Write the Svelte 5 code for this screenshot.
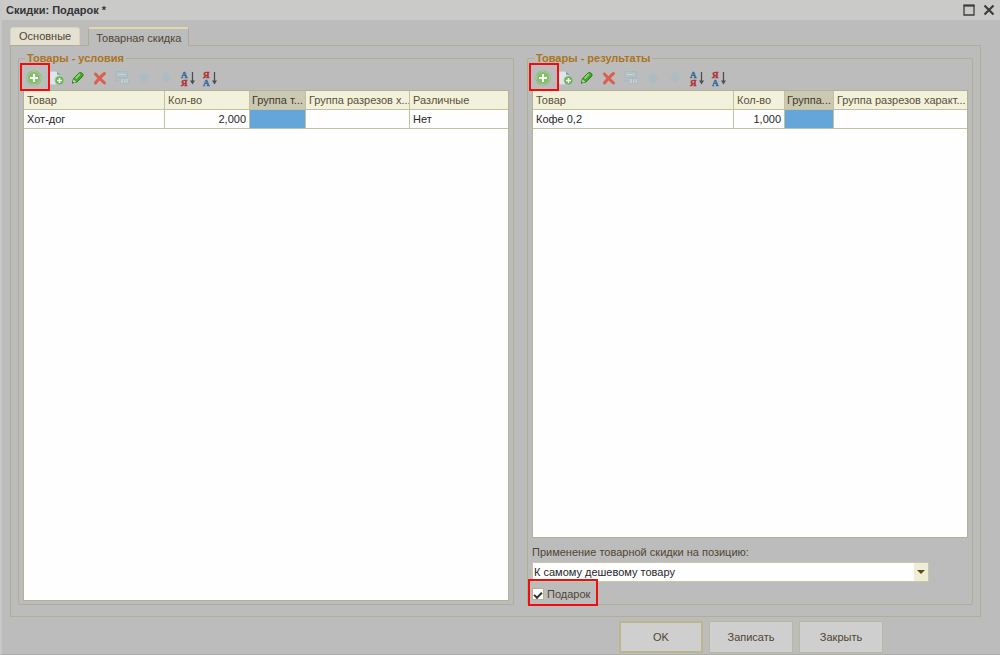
<script lang="ts">
  type Column = { title: string; width?: number; align?: string; current?: boolean }
  type Panel = { id: string; title: string; columns: Column[]; row: string[] }

  const conditions: Panel = {
    id: 'conditions',
    title: 'Товары - условия',
    columns: [
      { title: 'Товар', width: 141 },
      { title: 'Кол-во', width: 85, align: 'num' },
      { title: 'Группа т...', width: 56, current: true },
      { title: 'Группа разрезов х...', width: 104 },
      { title: 'Различные' },
    ],
    row: ['Хот-дог', '2,000', '', '', 'Нет'],
  }

  const results: Panel = {
    id: 'results',
    title: 'Товары - результаты',
    columns: [
      { title: 'Товар', width: 201 },
      { title: 'Кол-во', width: 51, align: 'num' },
      { title: 'Группа...', width: 49, current: true },
      { title: 'Группа разрезов характ...' },
    ],
    row: ['Кофе 0,2', '1,000', '', ''],
  }

  const tools = [
    { icon: 'add', label: 'Добавить' },
    { icon: 'copy', label: 'Скопировать' },
    { icon: 'edit', label: 'Изменить' },
    { icon: 'delete', label: 'Удалить' },
    { icon: 'finish', label: 'Закончить редактирование', disabled: true },
    { icon: 'up', label: 'Переместить вверх', disabled: true },
    { icon: 'down', label: 'Переместить вниз', disabled: true },
    { icon: 'asc', label: 'Сортировать по возрастанию' },
    { icon: 'desc', label: 'Сортировать по убыванию' },
  ]

  let gift = $state(true)
  let position = $state('cheapest')
</script>

{#snippet icon(name: string)}
  <svg width="18" height="18" viewBox="0 0 18 18" aria-hidden="true">
    {#if name === 'add'}
      <circle cx="9" cy="9" r="7.5" fill="#7fb56a" />
      <circle cx="9" cy="9" r="6.5" fill="#86bd70" stroke="#a9d19a" />
      <path d="M9 5v8M5 9h8" stroke="#f4fbf0" stroke-width="2" />
    {:else if name === 'copy'}
      <path d="M2.5 2.5h8l3 3v10h-11z" fill="#dde6ea" stroke="#c3cfd6" />
      <path d="M10.5 2.5v3h3" fill="#8fa3b2" stroke="#8fa3b2" />
      <circle cx="12.500" cy="11.500" r="4.500" fill="#75ad65" stroke="#a4cb96" />
      <path d="M12.500 9v5M10 11.500h5" stroke="#f4fbf0" stroke-width="1.600" />
    {:else if name === 'edit'}
      <path d="M3.500 13.500l1-4 5.500-5.500q1.500-1.200 3.200.3t.4 3.200L8 13z" fill="#42a52c" stroke="#27811b" />
      <path d="M6.500 9.500l4.500-4.500" stroke="#8ad66c" stroke-width="1.800" />
      <path d="M3.500 14l1-3.500 2.800 2.300z" fill="#b8dba0" />
      <path d="M3 14.800l.6-2 1.400 1.200z" fill="#235c1b" />
    {:else if name === 'delete'}
      <path d="M4.500 5q2.500 3 9 9M13.500 4.500q-4 3-9 9.500" fill="none" stroke="#d9604f" stroke-width="3" stroke-linecap="round" />
    {:else if name === 'finish'}
      <path d="M2.500 2.500h12v6h-12z" fill="#b2c1c6" stroke="#a9b9bf" />
      <path d="M4.500 5.500h8" stroke="#c9d2d5" />
      <path d="M7.500 9.500h8v5h-8z" fill="#c6ced1" stroke="#acb9be" />
      <path d="M10.500 10v4M13 10v4" stroke="#acb9be" />
      <path d="M2 11.500h4" stroke="#acbac0" stroke-width="2" />
    {:else if name === 'up'}
      <path d="M9 3.500l5.500 5.500H12v4.500H6V9H3.500z" fill="#adbcc3" stroke="#adbcc3" stroke-linejoin="round" />
    {:else if name === 'down'}
      <path d="M6.500 4h5v4.500H14L9 13.500 4 8.500h2.500z" fill="#adbcc3" stroke="#adbcc3" stroke-linejoin="round" />
    {:else}
      <text x="2" y="9" class={name === 'asc' ? 'blue' : 'red'}>{name === 'asc' ? 'А' : 'Я'}</text>
      <text x="2" y="17" class={name === 'asc' ? 'red' : 'blue'}>{name === 'asc' ? 'Я' : 'А'}</text>
      <path d="M13.500 3v10" stroke="#4b4f55" stroke-width="1.300" />
      <path d="M11 11.500h5L13.500 15.500z" fill="#4b4f55" />
    {/if}
  </svg>
{/snippet}

{#snippet list(panel: Panel)}
  <div class="toolbar" role="toolbar" aria-label={panel.title}>
    {#each tools as tool (tool.icon)}
      <button
        type="button"
        class="tool"
        class:marked={tool.icon === 'add'}
        aria-label={tool.label}
        disabled={tool.disabled}
      >
        {@render icon(tool.icon)}
      </button>
    {/each}
  </div>
  <div class="list">
    <table>
      <colgroup>
        {#each panel.columns as column}
          <col style:width={column.width ? `${column.width}px` : 'auto'} />
        {/each}
      </colgroup>
      <thead>
        <tr>
          {#each panel.columns as column}
            <th class:current={column.current}>{column.title}</th>
          {/each}
        </tr>
      </thead>
      <tbody>
        <tr>
          {#each panel.row as cell, i}
            <td class={panel.columns[i].align} class:selected={panel.columns[i].current}>{cell}</td>
          {/each}
        </tr>
      </tbody>
    </table>
  </div>
{/snippet}

<div class="window">
  <header>
    <h1>Скидки: Подарок *</h1>
    <button type="button" class="sys" aria-label="Развернуть">
      <svg width="12" height="12" viewBox="0 0 12 12"><path d="M1 1.500h10v9.500H1z" fill="none" stroke="#3c3c3c" stroke-width="1.300" /><path d="M.5 1.500h11" stroke="#3c3c3c" stroke-width="2" /></svg>
    </button>
    <button type="button" class="sys" aria-label="Закрыть окно">
      <svg width="12" height="12" viewBox="0 0 12 12"><path d="M1.500 1.500l9 9M10.500 1.500l-9 9" stroke="#3c3c3c" stroke-width="2.200" /></svg>
    </button>
  </header>

  <main>
    <div class="tabs" role="tablist">
      <button type="button" role="tab" class="tab" aria-selected="false">Основные</button>
      <button type="button" role="tab" class="tab active" aria-selected="true">Товарная скидка</button>
    </div>

    <div class="page" role="tabpanel">
      <fieldset>
        <legend>{conditions.title}</legend>
        {@render list(conditions)}
      </fieldset>

      <fieldset>
        <legend>{results.title}</legend>
        {@render list(results)}
        <label class="caption" for="position">Применение товарной скидки на позицию:</label>
        <div class="combo">
          <select id="position" bind:value={position}>
            <option value="cheapest">К самому дешевому товару</option>
          </select>
        </div>
        <label class="check marked">
          <input type="checkbox" bind:checked={gift} />
          Подарок
        </label>
      </fieldset>
    </div>
  </main>

  <footer>
    <button type="button" class="action default">OK</button>
    <button type="button" class="action">Записать</button>
    <button type="button" class="action">Закрыть</button>
  </footer>
</div>

<style>
  :global(body) {
    margin: 0;
    background: #bdbcbc;
  }
  .window {
    box-sizing: border-box;
    min-height: 100vh;
    display: flex;
    flex-direction: column;
    background: #bdbcbc;
    border-left: 2px solid #c8c8c9;
    border-bottom: 1px solid #adadad;
    font-family: "Liberation Sans", Arial, sans-serif;
    font-size: 11px;
    line-height: 14px;
    color: #4f4633;
  }
  button,
  select {
    font: inherit;
    color: inherit;
  }
  header {
    display: flex;
    align-items: center;
    gap: 8px;
    height: 20px;
    padding: 0 5px 0 4px;
    background: #cacbc9;
  }
  h1 {
    flex: 1;
    margin: 0;
    font-size: 11px;
    line-height: 20px;
    color: #333338;
  }
  .sys {
    display: flex;
    padding: 0;
    border: 0;
    background: none;
  }
  main {
    flex: 1;
    display: flex;
    flex-direction: column;
    padding: 7px 19px 0 8px;
  }
  .tabs {
    display: flex;
    gap: 8px;
  }
  .tab {
    height: 18px;
    padding: 0 8px;
    border: 1px solid #d8d4b8;
    border-bottom: 0;
    border-radius: 3px 3px 0 0;
    background: #e4e1d2;
    line-height: 17px;
  }
  .tab.active {
    height: 19px;
    margin-bottom: -1px;
    padding: 0 7px;
    border-color: #aeab94;
    border-top: 2px solid #e3d9a8;
    background: #bdbcbc;
    line-height: 16px;
    z-index: 1;
  }
  .page {
    flex: 1;
    display: grid;
    grid-template-columns: 496fr 446fr;
    gap: 13px;
    padding: 5px 7px 11px;
    border: 1px solid #b0ae94;
  }
  fieldset {
    display: flex;
    flex-direction: column;
    min-width: 0;
    margin: 0;
    padding: 2px 4px 3px;
    border: 1px solid #b0ae94;
    border-radius: 2px;
  }
  legend {
    margin-left: 2px;
    padding: 0 2px;
    font-weight: bold;
    color: #aa7420;
  }
  .toolbar {
    display: flex;
    height: 23px;
  }
  .tool {
    display: flex;
    align-items: center;
    justify-content: center;
    width: 22px;
    height: 22px;
    padding: 0;
    border: 0;
    background: none;
  }
  .tool svg {
    flex: none;
  }
  .tool text {
    font: bold 9px "Liberation Serif", serif;
  }
  .blue {
    fill: #2f6e9e;
    stroke: #2f6e9e;
    stroke-width: 0.4px;
  }
  .red {
    fill: #b03038;
    stroke: #b03038;
    stroke-width: 0.4px;
  }
  .marked {
    position: relative;
  }
  .marked::after {
    content: "";
    position: absolute;
    inset: -4px -5px -2px -3px;
    border: 2px solid #f00d0d;
    pointer-events: none;
  }
  .list {
    flex: 1;
    border: 1px solid #b3b293;
    background: #fefefe;
  }
  table {
    width: 100%;
    table-layout: fixed;
    border-collapse: separate;
    border-spacing: 0;
  }
  th,
  td {
    box-sizing: border-box;
    height: 19px;
    padding: 0 3px;
    border-right: 1px solid #c3c2a0;
    border-bottom: 1px solid #c3c2a0;
    overflow: hidden;
    white-space: nowrap;
    text-align: left;
    font-weight: normal;
  }
  th:last-child,
  td:last-child {
    border-right: 0;
  }
  th {
    padding-right: 0;
    background: #f2f1dc;
    color: #5c5036;
  }
  td {
    color: #26262a;
  }
  .current {
    padding-left: 2px;
    background: #cbc9b2;
    color: #3f3a2e;
  }
  .num {
    text-align: right;
  }
  .selected {
    background: #64a5da;
  }
  .caption {
    margin-top: 7px;
  }
  .combo {
    position: relative;
    box-sizing: border-box;
    width: 91%;
    height: 20px;
    margin-top: 3px;
    border: 1px solid #c8c7a8;
    background: #fefefe;
  }
  select {
    display: block;
    width: 100%;
    height: 18px;
    padding: 0 16px 0 1px;
    border: 0;
    background: none;
    appearance: none;
    color: #26262a;
  }
  .combo::before {
    content: "";
    position: absolute;
    top: 0;
    right: 0;
    bottom: 0;
    width: 14px;
    background: #eeeed6;
    pointer-events: none;
  }
  .combo::after {
    content: "";
    position: absolute;
    top: 7px;
    right: 3px;
    border: 4px solid transparent;
    border-top-color: #5d4b12;
    border-bottom: 0;
    pointer-events: none;
  }
  .check {
    display: flex;
    align-items: center;
    align-self: flex-start;
    gap: 3px;
    margin: 5px 0 0;
  }
  .check.marked::after {
    inset: -8px -8px -5px -4px;
  }
  .check input {
    display: grid;
    place-items: center;
    width: 12px;
    height: 12px;
    margin: 0;
    border: 1px solid #b5b391;
    box-sizing: border-box;
    background: #fefefe;
    appearance: none;
  }
  .check input:checked::before {
    content: "";
    width: 8px;
    height: 5px;
    border: solid #303034;
    border-width: 0 0 2px 2px;
    box-sizing: border-box;
    transform: rotate(-45deg);
  }
  footer {
    display: flex;
    justify-content: flex-end;
    gap: 6px;
    padding: 4px 117px 1px 0;
  }
  .action {
    width: 84px;
    height: 32px;
    padding: 0;
    border: 1px solid #bab89a;
    background: #d0cfcf;
  }
  .action.default {
    border: 2px solid #bab68e;
  }
</style>
